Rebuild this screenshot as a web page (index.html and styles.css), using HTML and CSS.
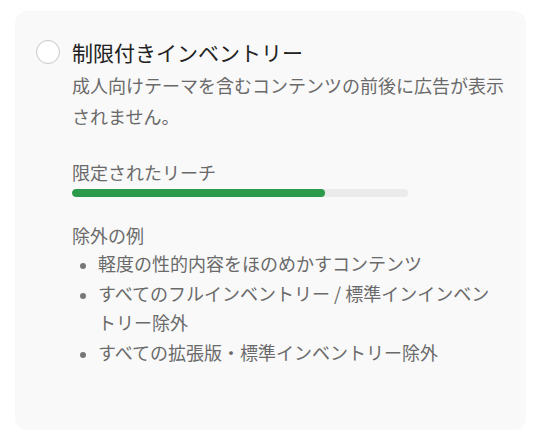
FILE: index.html
```html
<!DOCTYPE html>
<html lang="ja">
<head>
<meta charset="utf-8">
<link rel="stylesheet" href="styles.css">
</head>
<body>
<div class="card">
  <div class="option">
    <span class="radio"></span>
    <div class="content">
      <div class="title">制限付きインベントリー</div>
      <p class="desc">成人向けテーマを含むコンテンツの前後に広告が表示されません。</p>
      <div class="reach">
        <div class="label">限定されたリーチ</div>
        <div class="track"><div class="fill" style="width: 75.3%"></div></div>
      </div>
      <div class="examples">
        <div class="label">除外の例</div>
        <ul class="list">
          <li>軽度の性的内容をほのめかすコンテンツ</li>
          <li>すべてのフルインベントリー / 標準インインベントリー除外</li>
          <li>すべての拡張版・標準インベントリー除外</li>
        </ul>
      </div>
    </div>
  </div>
</div>
</body>
</html>
```

FILE: styles.css
```css
* { box-sizing: border-box; }
html, body { margin: 0; padding: 0; background: #ffffff; }
body {
  padding: 11px 17px 12px 15px;
  font-family: "Noto Sans CJK JP", "Noto Sans", sans-serif;
}
.card {
  background: #f9f9f9;
  border-radius: 12px;
  height: 419px;
  padding: 28px 20px 20px 21px;
}
.option {
  display: flex;
  gap: 12px;
  align-items: flex-start;
}
.radio {
  flex: 0 0 auto;
  width: 24px;
  height: 24px;
  margin-top: 1px;
  border-radius: 50%;
  border: 1px solid #c6c6c6;
  background: #ffffff;
}
.content { flex: 1; min-width: 0; }
.title {
  font-size: 21px;
  line-height: 26px;
  color: #222222;
}
.desc {
  margin: 5px 0 0;
  font-size: 18px;
  line-height: 31px;
  color: #6a6a6a;
}
.reach { margin-top: 26px; }
.label {
  font-size: 18px;
  line-height: 28px;
  color: #6a6a6a;
}
.track {
  margin-top: 3px;
  width: 336px;
  height: 8px;
  border-radius: 4px;
  background: #ebebeb;
  overflow: hidden;
}
.fill {
  height: 100%;
  border-radius: 4px;
  background: #2b9a4a;
}
.examples { margin-top: 24px; }
.list {
  margin: 0 0 0;
  padding: 0 0 0 26px;
  font-size: 18px;
  line-height: 29px;
  color: #6a6a6a;
}
.list li { padding-left: 0; }
.list li + li { margin-top: 1px; }
.list li::marker { color: #777777; font-size: 15px; }
```
